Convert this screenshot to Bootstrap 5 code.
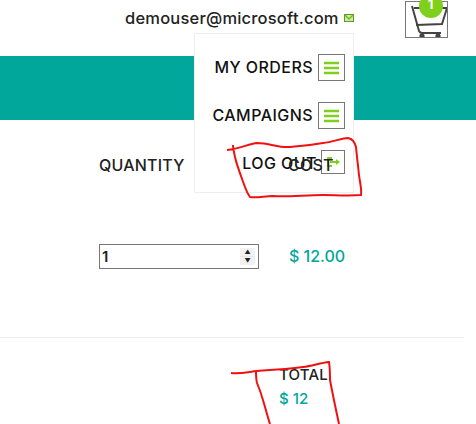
<!DOCTYPE html>
<html lang="en">
<head>
  <meta charset="UTF-8" />
  <title>Cart</title>
  <link rel="stylesheet" href="https://cdn.jsdelivr.net/npm/bootstrap@5.3.0/dist/css/bootstrap.min.css" />
  <style>
    body {
      font-family: Inter, "Open Sans", sans-serif;
      color: #222;
      overflow: hidden;
      height: 424px;
    }
    .top-head {
      height: 56px;
      padding-left: 125px;
    }
    .user-mail {
      font-size: 16.5px;
      font-weight: 500;
      letter-spacing: .2px;
      margin-top: 8px;
      line-height: 20px;
    }
    .mail-icon {
      margin: 14px 0 0 5px;
    }
    .cart-box {
      width: 43px;
      height: 37px;
      margin: 1px 0 0 51px;
      border: 1px solid #777;
      position: relative;
    }
    .cart-count {
      position: absolute;
      left: 13px;
      top: -8px;
      width: 24px;
      height: 24px;
      border-radius: 50%;
      background: #7fd01c;
      color: #fff;
      font-size: 13px;
      font-weight: 700;
      line-height: 20px;
      text-align: center;
    }
    .teal-band {
      height: 64px;
      background: #00a79a;
    }
    .user-menu {
      position: absolute;
      left: 194px;
      top: 33px;
      width: 160px;
      height: 160px;
      background: #fff;
      border: 1px solid #eee;
      padding: 20px 8px 0 0;
      z-index: 2;
    }
    .menu-row {
      height: 48px;
      font-size: 16px;
      font-weight: 500;
      letter-spacing: .45px;
      color: #111;
    }
    .menu-label {
      margin-top: 1px;
    }
    .menu-ico {
      width: 27px;
      height: 27px;
      margin-left: 5px;
      border: 1px solid #777;
      background: #fff;
    }
    .menu-ico.small-ico {
      width: 24px;
      height: 24px;
      margin-left: 4px;
    }
    .main-area {
      position: relative;
    }
    .qty-label {
      position: absolute;
      left: 99px;
      top: 33px;
      font-size: 16px;
      font-weight: 500;
      letter-spacing: .2px;
    }
    .cost-label {
      position: absolute;
      left: 288px;
      top: 33px;
      font-size: 16px;
      font-weight: 500;
      letter-spacing: .2px;
      z-index: 3;
    }
    .qty-row {
      padding: 124px 0 0 99px;
      height: 217px;
    }
    .qty-input {
      width: 160px;
      height: 25px;
      border: 1px solid #777;
      font-size: 15px;
      font-weight: 600;
      line-height: 23px;
      padding: 0 3px 0 2px;
    }
    .spin-btns {
      width: 15px;
      height: 17px;
      background: #e8e8e8;
      font-size: 6px;
      line-height: 8px;
      text-align: center;
      color: #222;
    }
    .spin-btns div {
      height: 8px;
      background: #f2f2f2;
      margin-bottom: 1px;
      overflow: hidden;
    }
    .price {
      color: #00a79a;
      font-size: 16px;
      font-weight: 500;
      line-height: 24px;
      margin-left: 30px;
    }
    .total-rule {
      width: 464px;
      border-top: 1px solid #eee;
      padding: 26px 0 0 279px;
    }
    .total-label {
      font-size: 15px;
      font-weight: 500;
      letter-spacing: .2px;
      line-height: 22px;
    }
    .total-value {
      color: #00a79a;
      font-size: 15px;
      font-weight: 500;
      line-height: 22px;
      margin-top: 2px;
    }
    .scribble {
      position: absolute;
      left: 0;
      top: 0;
      z-index: 5;
      pointer-events: none;
    }
  </style>
</head>
<body>
  <!-- top bar -->
  <div class="top-head d-flex align-items-start">
    <span class="user-mail">demouser@microsoft.com</span>
    <svg class="mail-icon" width="10" height="8" viewBox="0 0 10 8">
      <rect x="0.5" y="0.5" width="9" height="7" fill="#cfe8a8" stroke="#5a9a20" />
      <path d="M1 1l4 4 4-4" fill="none" stroke="#6fbe1c" stroke-width="1.4" />
    </svg>
    <div class="cart-box">
      <svg class="d-block" width="41" height="35" viewBox="0 0 41 35">
        <path d="M6 4l7 25q1 2 3 2h19" fill="none" stroke="#444" stroke-width="2" />
        <path d="M8 6l33 0-5 16-26 1" fill="none" stroke="#444" stroke-width="2" />
        <circle cx="16" cy="34" r="2.6" fill="#444" />
        <circle cx="32" cy="34" r="2.6" fill="#444" />
      </svg>
      <span class="cart-count">1</span>
    </div>
  </div>

  <div class="teal-band"></div>

  <!-- dropdown menu -->
  <div class="user-menu">
    <div class="menu-row d-flex justify-content-end align-items-start">
      <span class="menu-label">MY ORDERS</span>
      <span class="menu-ico d-flex align-items-center justify-content-center">
        <svg width="17" height="14" viewBox="0 0 17 14"><path d="M1 2h15M1 7h15M1 12h15" stroke="#7fd01c" stroke-width="2.4" /></svg>
      </span>
    </div>
    <div class="menu-row d-flex justify-content-end align-items-start">
      <span class="menu-label">CAMPAIGNS</span>
      <span class="menu-ico d-flex align-items-center justify-content-center">
        <svg width="17" height="14" viewBox="0 0 17 14"><path d="M1 2h15M1 7h15M1 12h15" stroke="#7fd01c" stroke-width="2.4" /></svg>
      </span>
    </div>
    <div class="menu-row d-flex justify-content-end align-items-start">
      <span class="menu-label">LOG OUT</span>
      <span class="menu-ico small-ico d-flex align-items-center justify-content-center">
        <svg width="14" height="12" viewBox="0 0 14 12"><path d="M6 2H2v8h4" fill="none" stroke="#7fd01c" stroke-width="1.8" /><path d="M4 6h7" stroke="#7fd01c" stroke-width="2" /><path d="M10 3l4 3-4 3z" fill="#7fd01c" /></svg>
      </span>
    </div>
  </div>

  <!-- cart line -->
  <div class="main-area">
    <span class="qty-label">QUANTITY</span>
    <span class="cost-label">COST</span>
    <div class="qty-row d-flex align-items-start">
      <div class="qty-input d-flex justify-content-between align-items-center">
        <span>1</span>
        <div class="spin-btns"><div>&#9650;</div><div>&#9660;</div></div>
      </div>
      <span class="price">$ 12.00</span>
    </div>
    <div class="total-rule">
      <div class="total-label">TOTAL</div>
      <div class="total-value">$ 12</div>
    </div>
  </div>

  <!-- red pen marks on the screenshot -->
  <svg class="scribble" width="476" height="424" viewBox="0 0 476 424" fill="none" stroke="#f01010" stroke-width="2">
    <path d="M227 150C240 149 248 144 257 143C270 143 278 148 290 147C305 146 312 145 323 143C333 142 342 138 348 138C353 139 355 143 356 147C357 158 358 165 359 175C360 183 362 190 361 195C348 196 335 195 323 195C305 195 288 197 273 196C265 196 257 198 250 197C247 193 246 190 245 187C241 176 237 166 235 157C234 152 233 148 233 145" />
    <path d="M231 373C240 374 248 372 257 371C272 370 288 369 303 367C312 366 320 363 329 362C330 368 330 374 330 380C333 396 336 410 339 424" />
    <path d="M256 371C256 375 256 379 257 383C259 388 261 393 262 397C265 406 267 415 270 424" />
  </svg>
</body>
</html>
